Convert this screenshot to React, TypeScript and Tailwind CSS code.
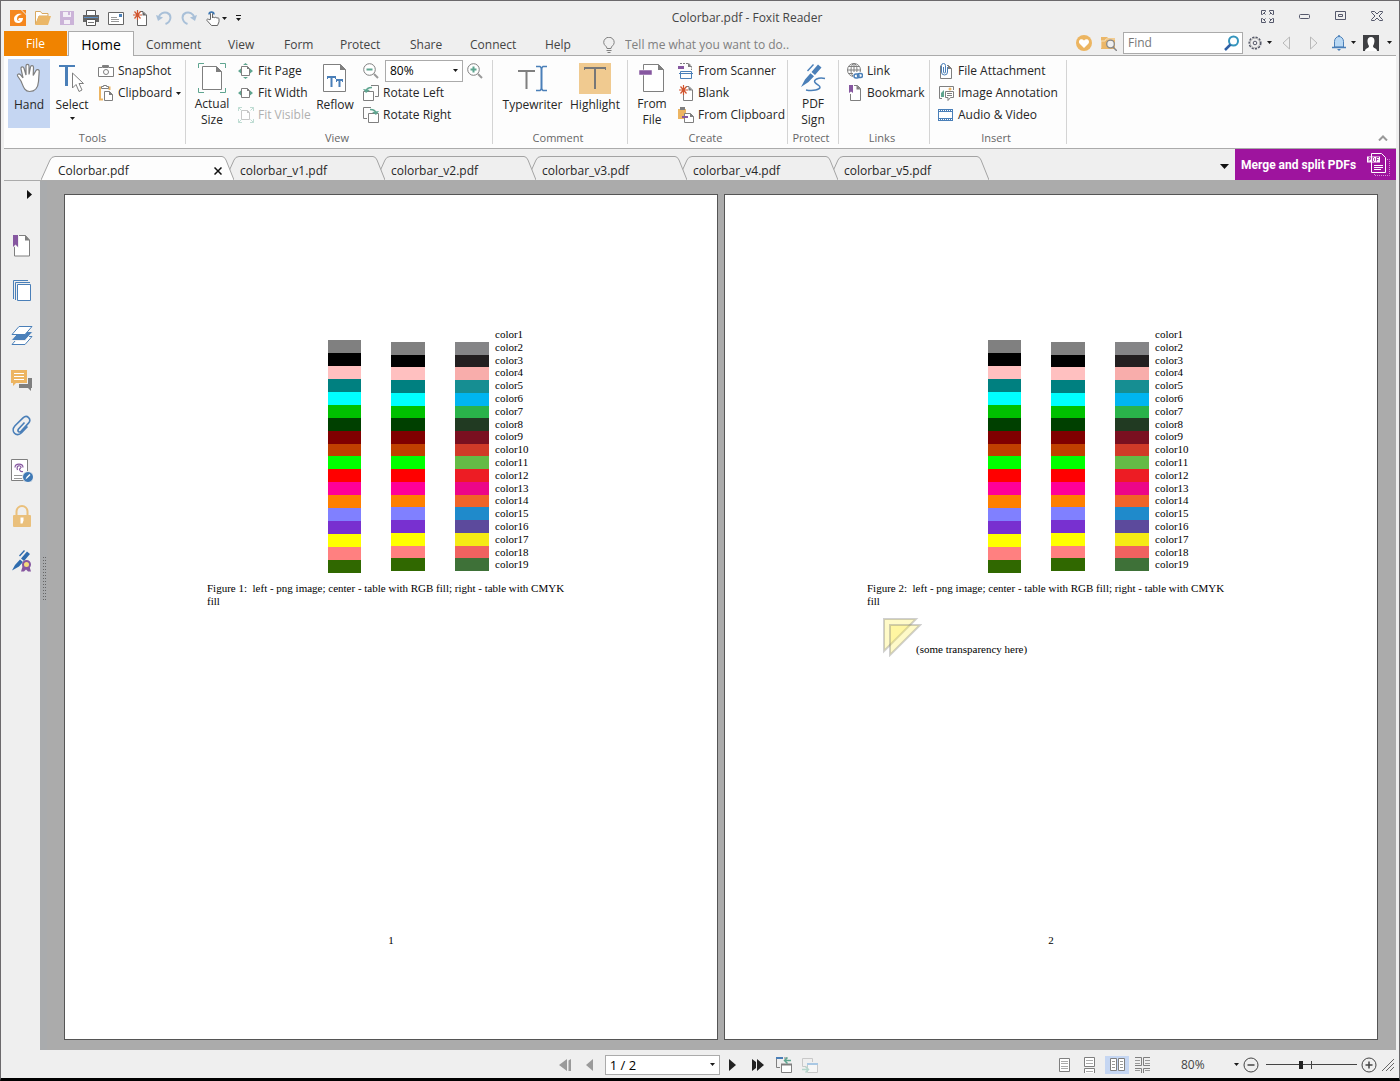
import type { ReactNode } from 'react';

const GREY = '#7f7f7f';
const BLUE = '#4a7fb8';
const GREEN = '#5fa590';
const PURPLE = '#8657a0';
const AMBER = '#edb562';

type DrawProps = { w: number; h: number; children: ReactNode; className?: string };

function Draw({ w, h, children, className = 'shrink-0' }: DrawProps) {
  return (
    <svg width={w} height={h} viewBox={`0 0 ${w} ${h}`} fill="none" className={className} aria-hidden="true">
      {children}
    </svg>
  );
}

function Caret({ className = 'shrink-0' }: { className?: string }) {
  return (
    <Draw w={5} h={3} className={className}>
      <path d="M0 0h5L2.500 3z" fill="#1a1a1a" />
    </Draw>
  );
}

/* Quick access toolbar */

const FoxitLogo = () => (
  <Draw w={16} h={16}>
    <path d="M0 0h11l5 5v11H0z" fill="#f5871f" />
    <path d="M12 0h4v4z" fill="#f5871f" />
    <path d="M12 4C8 3 4 5 4 9c0 3 2 4 4 4 3 0 5-2 5-5H9l-1 2h2c-1 1-3 1-3-1 0-3 2-4 5-5z" fill="#fff" />
  </Draw>
);
const OpenIcon = () => (
  <Draw w={16} h={14}>
    <path d="M.5 13V.5h5l1.500 2h6V5H4L1 13" fill="#fff" stroke="#d9a860" />
    <path d="M4 5h12l-3 9H0z" fill="#ebb768" />
  </Draw>
);
const SaveIcon = () => (
  <Draw w={14} h={14}>
    <path d="M0 0h14v14H0z" fill="#cbb3d8" />
    <path d="M3 1h8v5H3zM4 9h6v4H4z" fill="#f3eef6" />
    <path d="M8 1h2v3H8z" fill="#cbb3d8" />
  </Draw>
);
const PrintIcon = () => (
  <Draw w={16} h={16}>
    <path d="M3.500 5V.5h9V5" fill="#fff" stroke="#555" />
    <path d="M0 5h16v7H0z" fill="#666" />
    <path d="M1 7h14v1H1z" fill="#5d8fc4" />
    <path d="M3.500 9.500h9v6h-9z" fill="#fff" stroke="#555" />
    <path d="M5 12.500h6" stroke="#777" />
  </Draw>
);
const MailIcon = () => (
  <Draw w={16} h={13}>
    <path d="M.5.5h15v12H.5z" fill="#fff" stroke="#666" />
    <path d="M3 5.500h6M3 7.500h8M3 9.500h8" stroke="#999" />
    <path d="M11 2h3v3h-3z" fill={BLUE} />
  </Draw>
);
const NewPageIcon = ({ line = GREY }: { line?: string }) => (
  <Draw w={14} h={16}>
    <path d="M4.500 8v7.500h9V5L10 1.500H7" fill="#fff" stroke={line} />
    <path d="M9.500 1.500v4h4z" fill={line} />
    <path d="M4.500 0v10M0 5h9M1.500 1.500l6 7M7.500 1.500l-6 7" stroke="#d1552f" strokeWidth="1.200" />
  </Draw>
);
const UndoIcon = ({ flip = false }: { flip?: boolean }) => (
  <Draw w={16} h={14} className={flip ? 'shrink-0 -scale-x-100' : 'shrink-0'}>
    <path d="M2.500 6.500C4 2 8 .8 11 1.800c5 1.800 4.500 9-1.500 11.200" stroke="#a9c0d8" strokeWidth="2" />
    <path d="M0 4l2 6 5-3.500z" fill="#a9c0d8" />
  </Draw>
);
const TouchIcon = () => (
  <Draw w={14} h={16}>
    <path d="M4.500 9.500V3.500c0-1.500 2-1.500 2 0V8c0-1 2-1 2 0 0-1 2.500-1 2.500.3 0-.8 2-.6 2 .5v3L11.500 15.500h-6L1 10.500c-.8-1.200.8-2 2-.8z" fill="#fff" stroke="#666" />
    <path d="M3 4.500a2.500 2.500 0 1 1 5 0" stroke="#3d77b3" strokeWidth="1.500" />
  </Draw>
);

/* Ribbon icons, 32px */

const HandIcon = () => (
  <Draw w={26} h={32}>
    <path d="M5 19 1.600 14C.8 12.400 2.800 11.200 4.200 12.500L7 16 5 6.800C4.600 4.500 7.300 4 8 6.200L10 13V4c0-2.200 3-2.200 3 0v8.500L14.500 5c.4-2 3.100-1.600 3 .5L17.200 13.500 20 8.500c1-1.800 3.600-.8 3.200 1L22.500 19.500C22 26 19 29.500 13.500 29.500 8.500 29.500 7.500 25 5 19z" fill="#fff" stroke={GREY} strokeWidth="1.200" />
  </Draw>
);
const SelectIcon = () => (
  <Draw w={26} h={32}>
    <path d="M0 3h16v2H0zM6 3h3v21H6z" fill={BLUE} />
    <path d="M13.500 11v15l3.500-3.500 3 7 3-1.500-3-6.500h4.500z" fill="#fff" stroke={GREY} />
  </Draw>
);
const ActualSizeIcon = () => (
  <Draw w={28} h={32}>
    <path d="M.5 6V1.500H6M22 1.500h5.500V6M.5 26v4.500H6M22 30.500h5.500V26" stroke={GREEN} />
    <path d="M4.500 4.500h14l5 5v18h-19z" fill="#fff" stroke={GREY} />
    <path d="M18 4v6h6z" fill={GREY} />
  </Draw>
);
const ReflowIcon = () => (
  <Draw w={24} h={32}>
    <path d="M.5 2.500h17l5 5v22H.5z" fill="#fff" stroke={GREY} />
    <path d="M17 2v6h6z" fill={GREY} />
    <path d="M4 14h9v3h-1v-1H9.500v9h-2v-9H5v1H4zM13 17h7v3h-1v-1h-1.500v6h-2v-6H14v1h-1z" fill={BLUE} />
  </Draw>
);
const TypewriterIcon = () => (
  <Draw w={30} h={32}>
    <path d="M1 10V9h15v1M8.500 9v18" stroke={GREY} strokeWidth="2" />
    <path d="M18 4.500h4l1.500 1.500L25 4.500h4M18 28.500h4l1.500-1.500 1.500 1.500h4" stroke={BLUE} strokeWidth="1.500" />
    <path d="M23.500 5v23" stroke={BLUE} strokeWidth="2" />
  </Draw>
);
const HighlightIcon = () => (
  <Draw w={32} h={32}>
    <path d="M0 1h32v31H0z" fill="#f0ca90" />
    <path d="M5 6h22M16 6v21" stroke="#777" strokeWidth="2" />
    <path d="M5.500 5v3M26.500 5v3" stroke="#777" />
  </Draw>
);
const FromFileIcon = () => (
  <Draw w={26} h={32}>
    <path d="M4.500 2.500h15l5 5v22h-20z" fill="#fff" stroke={GREY} />
    <path d="M19 2v6h6z" fill={GREY} />
    <path d="M0 8h13v5H0z" fill={PURPLE} stroke="#fdfdfd" strokeWidth=".5" />
  </Draw>
);
const SignIcon = () => (
  <Draw w={26} h={32}>
    <path d="M7 8.500 13 2l1 1-6 6.500z" fill={BLUE} />
    <path d="M11.500 10 18 2.500 21.500 5.500 15 13zM10.500 11.300 14 14.300 8.500 20 1 25l4-7.500z" fill={BLUE} />
    <path d="M25 16.500c-7-1.500-12 1.500-10 4s5.500 3 5 5-6.500 4-14 2.500" stroke={BLUE} strokeWidth="1.500" />
  </Draw>
);

/* Ribbon icons, 16px */

const CameraIcon = () => (
  <Draw w={16} h={16}>
    <path d="M.5 4.500h4v-2h6v2h5v9H.5z" fill="#fff" stroke={GREY} />
    <circle cx="8" cy="9" r="2.500" stroke={GREY} />
    <path d="M5 2h5v3H5z" fill={GREY} />
  </Draw>
);
const ClipboardIcon = () => (
  <Draw w={16} h={16}>
    <path d="M3 2.500H2v12h3M10 2.500h1.500V5" stroke={AMBER} strokeWidth="2" />
    <path d="M3.500 3.500v-2h2V.5h3v1h2v2z" fill="#fff" stroke={GREY} />
    <path d="M6.500 6.500h5l3 3v6h-8z" fill="#fff" stroke={GREY} />
    <path d="M11 6v4h4z" fill={GREY} />
  </Draw>
);
type FitKind = 'page' | 'width' | 'visible';
const FitIcon = ({ kind }: { kind: FitKind }) => {
  const line = kind === 'visible' ? '#c8c8c8' : GREY;
  return (
    <Draw w={16} h={16}>
      <path d="M3.500 3.500h6l2 2v7h-8z" fill="#fff" stroke={line} />
      <path d="M9 3v3h3z" fill={line} />
      {kind !== 'visible' && <path d="M0 8l3-2.500v5zM15 8l-3-2.500v5z" fill={GREEN} />}
      {kind === 'page' && <path d="M7.500 0l2.500 2H5zM7.500 16l2.500-2H5z" fill={GREEN} />}
      {kind === 'visible' && (
        <path d="M.5 4V.5H4M.5.5l3 3M12 .5h3.500V4M15.500.5l-3 3M.5 12v3.500H4M.5 15.500l3-3M12 15.500h3.500V12M15.500 15.500l-3-3" stroke="#bfdcd3" />
      )}
    </Draw>
  );
};
const ZoomIcon = ({ plus = false }: { plus?: boolean }) => (
  <Draw w={16} h={16}>
    <circle cx="6.500" cy="6.500" r="5.800" fill="#fff" stroke={GREY} />
    <path d="M11 11l4 4" stroke="#999" strokeWidth="2" />
    <path d={plus ? 'M3.500 6.500h6M6.500 3.500v6' : 'M3.500 6.500h6'} stroke={GREEN} strokeWidth="2" />
  </Draw>
);
const RotateIcon = ({ right = false }: { right?: boolean }) => (
  <Draw w={16} h={16} className={right ? 'shrink-0 -scale-x-100' : 'shrink-0'}>
    <path d="M8 .5h7.500v11H12" stroke={GREY} />
    <path d="M.5 6.500h10v9H.5z" fill="#fff" stroke={GREY} />
    <path d="M3 7c0-3 2-4.500 6-4.500" stroke={GREEN} strokeWidth="1.500" />
    <path d="M0 4l3 4 4-3z" fill={GREEN} />
  </Draw>
);
const ScannerIcon = () => (
  <Draw w={16} h={16}>
    <path d="M2 .5h9l2.500 3V7" stroke={GREY} strokeDasharray="2 1" />
    <path d="M10 0v4h4z" fill={GREY} />
    <path d="M0 3h6v3H0z" fill={PURPLE} />
    <path d="M2.500 10V8.500h11V10M2.500 11v4.500h11V11M1 10.500h14" stroke={BLUE} />
  </Draw>
);
const PasteIcon = () => (
  <Draw w={16} h={16}>
    <path d="M0 2h8v10H0z" fill={AMBER} />
    <path d="M2 0h5v3H2z" fill={GREY} />
    <path d="M6.500 6.500h6l3 3v6h-9z" fill="#fff" stroke={GREY} />
    <path d="M12 6v4h4z" fill={GREY} />
    <path d="M4 9h6v2H4z" fill={PURPLE} />
  </Draw>
);
const LinkIcon = () => (
  <Draw w={16} h={16}>
    <circle cx="7" cy="7" r="6.500" stroke={GREY} />
    <ellipse cx="7" cy="7" rx="3" ry="6.500" stroke={GREY} />
    <path d="M.5 7h13M1.500 3.500h11M1.500 10.500h6M7 .5v13" stroke={GREY} />
    <path d="M6 9h10v7H6z" fill="#fdfdfd" />
    <rect x="7" y="11" width="5" height="4" rx="2" stroke={BLUE} strokeWidth="1.500" />
    <rect x="10.500" y="10.500" width="5" height="4" rx="2" stroke={BLUE} strokeWidth="1.500" />
  </Draw>
);
const BookmarkIcon = () => (
  <Draw w={16} h={16}>
    <path d="M7 .5h3.500l3 3v12h-10V9" fill="#fff" stroke={GREY} />
    <path d="M9.500 0v4.500H14z" fill={GREY} />
    <path d="M2 0h4v8L4 6.500 2 8z" fill={PURPLE} />
  </Draw>
);
const AttachmentIcon = () => (
  <Draw w={16} h={16}>
    <path d="M2.500 2.500v13h11v-10l-3-3H9" fill="#fff" stroke={GREY} />
    <path d="M10 2v4h4z" fill={GREY} />
    <path d="M5.500 4v5a1 1 0 0 0 2 0V2.500a2 2 0 0 0-4 0V9a2.500 2.500 0 0 0 6 0V4" stroke={BLUE} />
  </Draw>
);
const ImageNoteIcon = () => (
  <Draw w={16} h={16}>
    <path d="M4 13.500H1.500v-12h14V5" stroke={GREY} />
    <path d="M3 12V8l3-3v7z" fill={GREEN} />
    <circle cx="12" cy="4" r="1.500" fill={AMBER} />
    <path d="M7.500 6.500h8v6h-3l-2.500 3v-3H7.500z" fill="#fff" stroke={GREY} />
    <path d="M9 8.500h5M9 10.500h5" stroke={GREY} />
  </Draw>
);
const FilmIcon = () => (
  <Draw w={16} h={16}>
    <path d="M.5 2.500h14v11H.5z" fill="#fff" stroke={BLUE} />
    <path d="M0 2h15v3H0zM0 11h15v3H0z" fill={BLUE} />
    <path d="M1 3.500h13M1 12.500h13" stroke="#fff" strokeDasharray="1 1" />
  </Draw>
);

/* Navigation panel icons */

const NavBookmark = () => (
  <Draw w={18} h={22}>
    <path d="M1.500.500h11l4 4.500v16h-15z" fill="#fff" stroke={GREY} />
    <path d="M12 0v5.500h5z" fill={GREY} />
    <path d="M0 0h6v13l-3-2-3 2z" fill="#efefef" />
    <path d="M0 0h5v12L2.500 9.500 0 12z" fill={PURPLE} />
  </Draw>
);
const NavPages = () => (
  <Draw w={18} h={22}>
    <path d="M.5 19V.5H15M2.500 20V2.500H17" stroke={BLUE} />
    <path d="M4.500 4.500h13v16h-13z" fill="#fff" stroke={BLUE} />
  </Draw>
);
const NavLayers = () => (
  <Draw w={22} h={20}>
    <path d="M1 18.500h13l7-8H8z" fill="#fff" stroke={BLUE} />
    <path d="M0 14.500h14l8-9H8z" fill="#4a80ba" stroke="#efefef" />
    <path d="M1 8.500h13l7-8H8z" fill="#fff" stroke={BLUE} />
  </Draw>
);
const NavComments = () => (
  <Draw w={22} h={22}>
    <path d="M8 8h13v10h-1v3l-3-3H8z" fill={GREY} />
    <path d="M0 0h17v14H6l-4 3v-3H0z" fill="#efefef" />
    <path d="M0 0h16v13H5l-3 3v-3H0z" fill={AMBER} />
    <path d="M3 3.500h10M3 6.500h10M3 9.500h10" stroke="#fff" />
  </Draw>
);
const NavClip = () => (
  <Draw w={20} h={22}>
    <path d="M12.500 7.500l-6 6.500c-1.500 2 .7 4 2.500 2.300l7.500-8.200c3.500-4-1.500-9-5.500-5.200L3 10.800c-5 5.500 1.500 12.200 6.500 7l6-6.300" stroke={BLUE} strokeWidth="1.600" />
  </Draw>
);
const NavSignedDoc = () => (
  <Draw w={22} h={23}>
    <path d="M.5.5h16v21H.5z" fill="#fff" stroke={GREY} />
    <path d="M4 8.500C4 4 12 4 12 8.500M6.500 11C4.500 6 10.500 5.500 10 9M12 12.500c-3.500 1-4.500-3.500-2-3.500" stroke={PURPLE} strokeWidth="1.200" />
    <path d="M3 16.500h9M3 19.500h8" stroke="#999" />
    <circle cx="17" cy="18" r="5.500" fill="#3f79b5" stroke="#efefef" />
    <path d="M14.500 20.500l1-2.500 3-3 1 1-3 3z" fill="#fff" />
  </Draw>
);
const NavLock = () => (
  <Draw w={18} h={22}>
    <path d="M3.500 11V6.500a5.500 5.500 0 0 1 11 0V11" stroke="#eac07c" strokeWidth="2" />
    <rect y="10" width="18" height="12" rx="1" fill="#eac07c" />
    <path d="M7.500 12.500h3v3l-1 3h-2z" fill="#fff" />
  </Draw>
);
const NavSignature = () => (
  <Draw w={20} h={22}>
    <path d="M7 5.500 12 0l1 1-5 5.500zM9 8.500 15 1.500l3 2.500-6 7zM8 9.500l3 2.500-4 4.500L0 20.500 3 15z" fill="#2f6cae" />
    <path d="M11 15l-2 6.500h3l2-2 2 2h3L17 15z" fill={PURPLE} />
    <circle cx="14.500" cy="14.500" r="3.500" fill="#f5dc7a" stroke={PURPLE} strokeWidth="2" />
  </Draw>
);

/* Ribbon building blocks */

function BigButton({ icon, lines, className, menu = false, pressed = false }: {
  icon: ReactNode; lines: string[]; className: string; menu?: boolean; pressed?: boolean;
}) {
  return (
    <button
      type="button"
      aria-pressed={pressed}
      className={`flex h-[69px] shrink-0 flex-col items-center pt-[3px] ${pressed ? 'bg-[#c5d6f2]' : ''} ${className}`}
    >
      <span className="flex h-[35px] items-start justify-center">{icon}</span>
      {lines.map((line) => (
        <span key={line} className="leading-4">{line}</span>
      ))}
      {menu && <Caret className="mt-1 shrink-0" />}
    </button>
  );
}

function SmallButton({ icon, label, menu = false, disabled = false }: {
  icon: ReactNode; label: string; menu?: boolean; disabled?: boolean;
}) {
  return (
    <button type="button" disabled={disabled} className="flex h-[22px] items-center gap-1 text-left disabled:text-[#b0b0b0]">
      <span className="flex w-4 shrink-0 justify-center">{icon}</span>
      <span>{label}</span>
      {menu && <Caret />}
    </button>
  );
}

function Group({ title, className, children }: { title: string; className: string; children: ReactNode }) {
  return (
    <section aria-label={title} className={`flex shrink-0 flex-col ${className}`}>
      <div className="flex flex-1 pt-[3px]">{children}</div>
      <div className="pr-1 pb-[2px] text-center text-[11px] leading-4 text-[#666]">{title}</div>
    </section>
  );
}

const Divider = () => <div className="my-1 w-px shrink-0 bg-[#d4d4d4]" />;

function Ribbon() {
  return (
    <div className="flex h-[93px] border-b border-[#ababab] bg-[#fdfdfd] text-[#262626]">
      <Group title="Tools" className="w-[181px]">
        <BigButton icon={<HandIcon />} lines={['Hand']} className="ml-1 w-[42px]" pressed />
        <BigButton icon={<SelectIcon />} lines={['Select']} className="w-11" menu />
        <div className="pt-px pl-1">
          <SmallButton icon={<CameraIcon />} label="SnapShot" />
          <SmallButton icon={<ClipboardIcon />} label="Clipboard" menu />
        </div>
      </Group>
      <Divider />
      <Group title="View" className="w-[306px]">
        <BigButton icon={<ActualSizeIcon />} lines={['Actual', 'Size']} className="ml-1 w-11" />
        <div className="w-[77px] pt-px pl-1">
          <SmallButton icon={<FitIcon kind="page" />} label="Fit Page" />
          <SmallButton icon={<FitIcon kind="width" />} label="Fit Width" />
          <SmallButton icon={<FitIcon kind="visible" />} label="Fit Visible" disabled />
        </div>
        <BigButton icon={<ReflowIcon />} lines={['Reflow']} className="w-12" />
        <div className="pl-1">
          <div className="flex h-[23px] items-center">
            <button type="button" aria-label="Zoom out"><ZoomIcon /></button>
            <span className="relative mr-1 ml-[6px] flex items-center">
              <select aria-label="Zoom level" className="h-[22px] w-[78px] appearance-none border border-[#ababab] bg-white pl-1 text-black">
                <option>80%</option>
              </select>
              <Caret className="pointer-events-none absolute right-[5px]" />
            </span>
            <button type="button" aria-label="Zoom in"><ZoomIcon plus /></button>
          </div>
          <SmallButton icon={<RotateIcon />} label="Rotate Left" />
          <SmallButton icon={<RotateIcon right />} label="Rotate Right" />
        </div>
      </Group>
      <Divider />
      <Group title="Comment" className="w-[134px]">
        <BigButton icon={<TypewriterIcon />} lines={['Typewriter']} className="ml-1 w-[71px]" />
        <BigButton icon={<HighlightIcon />} lines={['Highlight']} className="w-[54px]" />
      </Group>
      <Divider />
      <Group title="Create" className="w-[159px]">
        <BigButton icon={<FromFileIcon />} lines={['From', 'File']} className="w-12" />
        <div className="pt-px pl-[2px]">
          <SmallButton icon={<ScannerIcon />} label="From Scanner" />
          <SmallButton icon={<NewPageIcon />} label="Blank" />
          <SmallButton icon={<PasteIcon />} label="From Clipboard" />
        </div>
      </Group>
      <Divider />
      <Group title="Protect" className="w-[50px]">
        <BigButton icon={<SignIcon />} lines={['PDF', 'Sign']} className="w-full" />
      </Group>
      <Divider />
      <Group title="Links" className="w-[90px]">
        <div className="pt-px pl-2">
          <SmallButton icon={<LinkIcon />} label="Link" />
          <SmallButton icon={<BookmarkIcon />} label="Bookmark" />
        </div>
      </Group>
      <Divider />
      <Group title="Insert" className="w-[136px]">
        <div className="pt-px pl-2">
          <SmallButton icon={<AttachmentIcon />} label="File Attachment" />
          <SmallButton icon={<ImageNoteIcon />} label="Image Annotation" />
          <SmallButton icon={<FilmIcon />} label="Audio & Video" />
        </div>
      </Group>
      <Divider />
      <button type="button" aria-label="Collapse ribbon" className="mt-auto mr-2 mb-[7px] ml-auto">
        <Draw w={10} h={6}>
          <path d="M1 5.500l4-4 4 4" stroke="#999" strokeWidth="2" />
        </Draw>
      </button>
    </div>
  );
}

function TitleBar() {
  const win = '#55586b';
  return (
    <header className="flex h-[30px] items-center pr-[13px] pl-[6px] text-[#444]">
      <div className="flex items-center gap-[9px] pt-1">
        <FoxitLogo />
        <button type="button" aria-label="Open"><OpenIcon /></button>
        <button type="button" aria-label="Save"><SaveIcon /></button>
        <button type="button" aria-label="Print"><PrintIcon /></button>
        <button type="button" aria-label="Email"><MailIcon /></button>
        <button type="button" aria-label="New"><NewPageIcon line="#666" /></button>
        <button type="button" aria-label="Undo"><UndoIcon /></button>
        <button type="button" aria-label="Redo"><UndoIcon flip /></button>
        <button type="button" aria-label="Touch mode" className="flex items-center gap-[2px]">
          <TouchIcon />
          <Caret />
        </button>
        <button type="button" aria-label="Customize">
          <Draw w={5} h={6}>
            <path d="M0 0h5v1H0zM0 3h5L2.500 6z" fill="#1a1a1a" />
          </Draw>
        </button>
      </div>
      <h1 className="flex-1 pt-1 pr-2 text-center">Colorbar.pdf - Foxit Reader</h1>
      <div className="flex items-center gap-[25px]">
        <button type="button" aria-label="Full screen">
          <Draw w={13} h={13}>
            <path d="M.5.5h4v1l-3 3h-1zM12.500.500h-4v1l3 3h1zM.5 12.500h4v-1l-3-3h-1zM12.500 12.500h-4v-1l3-3h1z" stroke={win} />
            <path d="M3 3l1.500 1.500M10 3 8.500 4.500M3 10l1.500-1.500M10 10 8.500 8.500" stroke={win} />
          </Draw>
        </button>
        <button type="button" aria-label="Minimize">
          <Draw w={11} h={5}><rect x=".5" y=".5" width="10" height="4" rx="1" stroke={win} /></Draw>
        </button>
        <button type="button" aria-label="Maximize">
          <Draw w={11} h={10}><path d="M.5.5h10v8H.5zM3.500 3.500h4v2h-4z" stroke={win} /></Draw>
        </button>
        <button type="button" aria-label="Close">
          <Draw w={12} h={10}>
            <path d="M.5.5h3L6 3 8.500.500h3v1L8 5l3.500 3.500v1h-3L6 7 3.500 9.500h-3v-1L4 5 .5 1.500z" stroke={win} />
          </Draw>
        </button>
      </div>
    </header>
  );
}

const MENU = [
  { label: 'Comment', width: 'w-[82px]' },
  { label: 'View', width: 'w-14' },
  { label: 'Form', width: 'w-14' },
  { label: 'Protect', width: 'w-[70px]' },
  { label: 'Share', width: 'w-[60px]' },
  { label: 'Connect', width: 'w-[75px]' },
  { label: 'Help', width: 'w-[57px]' },
];

function MenuBar() {
  return (
    <nav className="flex h-[25px] text-[#444]">
      <button type="button" className="w-[63px] shrink-0 bg-[#f08300] pt-px text-white">File</button>
      <div className="flex flex-1 items-stretch border-b border-[#ababab] pl-px">
        <button type="button" className="-mb-px w-[66px] shrink-0 border border-b-0 border-[#ababab] bg-[#fdfdfd] pt-[2px] text-[14px] text-black">Home</button>
        <div className="flex pl-3">
          {MENU.map((m) => (
            <button key={m.label} type="button" className={`shrink-0 pt-[3px] text-left ${m.width}`}>{m.label}</button>
          ))}
        </div>
        <label className="flex min-w-0 flex-1 items-center gap-[10px] pt-[3px] pl-px">
          <Draw w={12} h={16}>
            <path d="M4 11.500C4 9 .7 8.500.700 5.500a5.200 5.200 0 0 1 10.500 0C11.200 8.500 8 9 8 11.500zM3.500 13.500h5M4.500 15.500h3" stroke={GREY} />
          </Draw>
          <input aria-label="Tell me what you want to do" placeholder="Tell me what you want to do.." className="min-w-0 flex-1 bg-transparent outline-none placeholder:text-[#808080]" />
        </label>
        <div className="flex shrink-0 items-center pr-1 pb-px">
          <button type="button" aria-label="Favourites">
            <Draw w={16} h={16}>
              <circle cx="8" cy="8" r="8" fill="#ecb561" />
              <path d="M8 13 3.500 8.500C1.500 5.500 5.500 2.500 8 5.500c2.500-3 6.500 0 4.500 3z" fill="#fff" />
            </Draw>
          </button>
          <button type="button" aria-label="Find in folder" className="ml-[9px]">
            <Draw w={16} h={16}>
              <path d="M0 2h6l1 1h7v11H0z" fill="#ebb768" />
              <path d="M0 13V6h4l1-2h9" stroke="#f6e0bb" />
              <circle cx="9.500" cy="9" r="3.800" fill="#efefef" stroke="#888" strokeWidth="1.300" />
              <path d="M12 12l4 4" stroke="#888" strokeWidth="1.500" />
            </Draw>
          </button>
          <label className="ml-[6px] flex h-[22px] w-[120px] items-center border border-[#ababab] bg-white pr-[2px] pl-1">
            <input aria-label="Find" placeholder="Find" className="w-0 min-w-0 flex-1 outline-none placeholder:text-[#777]" />
            <Draw w={16} h={16}>
              <circle cx="9.500" cy="6" r="4.500" stroke="#3595bd" strokeWidth="2" />
              <path d="M6.500 9.500 1 15" stroke="#2f5fa5" strokeWidth="2.500" />
            </Draw>
          </label>
          <button type="button" aria-label="Settings" className="ml-[5px] flex items-center gap-[5px]">
            <Draw w={14} h={14}>
              <circle cx="7" cy="7" r="5.800" stroke="#555868" strokeWidth="1.500" strokeDasharray="2.200 1.200" />
              <circle cx="7" cy="7" r="4.800" fill="#efefef" stroke="#777" strokeWidth=".5" />
              <circle cx="7" cy="7" r="1.800" stroke="#555868" />
            </Draw>
            <Caret />
          </button>
          <button type="button" aria-label="Previous result" className="ml-[10px]">
            <Draw w={8} h={14}><path d="M7.500 1v12L1 7z" stroke="#b8b8b8" /></Draw>
          </button>
          <button type="button" aria-label="Next result" className="ml-5">
            <Draw w={8} h={14}><path d="M.5 1v12L7 7z" stroke="#b8b8b8" /></Draw>
          </button>
          <button type="button" aria-label="Notifications" className="ml-[14px] flex items-center gap-[5px]">
            <Draw w={14} h={16}>
              <path d="M2.500 12V6.500a4.500 5 0 0 1 9 0V12z" fill="#b9d8f3" stroke={BLUE} />
              <path d="M0 12.500h14M7 0v2" stroke={BLUE} strokeWidth="1.500" />
              <path d="M5 14h4l-2 2z" fill={BLUE} />
            </Draw>
            <Caret />
          </button>
          <button type="button" aria-label="Account" className="ml-[7px] flex items-center gap-2">
            <Draw w={16} h={16}>
              <path d="M0 0h16v16H0z" fill="#3f4043" />
              <path d="M2 16c0-3 4-2.500 4-5-2-3-2.500-9 2-9s4 6 2 9c0 2.500 4 2 4 5z" fill="#fff" />
            </Draw>
            <Caret />
          </button>
        </div>
      </div>
    </nav>
  );
}

function DocTab({ name, width, layer, active = false }: { name: string; width: string; layer: string; active?: boolean }) {
  const fill = active ? '#fdfdfd' : '#efefef';
  return (
    <div className={`relative flex h-6 shrink-0 ${width} ${layer}`}>
      <Draw w={14} h={24}>
        <path d="M0 24 9 4Q10.500.5 14 .5V24z" fill={fill} />
        <path d="M0 24 9 4Q10.500.5 14 .5" stroke="#a3a3a3" />
      </Draw>
      <div className={`flex min-w-0 flex-1 items-center justify-between border-t border-[#a3a3a3] pt-1 ${active ? 'bg-[#fdfdfd]' : 'bg-[#efefef]'}`}>
        <button type="button" className={active ? 'pl-[3px]' : 'pl-px'}>{name}</button>
        {active && (
          <button type="button" aria-label="Close tab">
            <Draw w={8} h={8}><path d="M.5.5l7 7M7.500.500l-7 7" stroke="#111" strokeWidth="1.500" /></Draw>
          </button>
        )}
      </div>
      <Draw w={12} h={24}>
        <path d="M12 24 4 4Q2.500.5 0 .5V24z" fill={fill} />
        <path d="M12 24 4 4Q2.500.5 0 .5" stroke="#a3a3a3" />
      </Draw>
    </div>
  );
}

function DocTabs() {
  return (
    <div className="flex h-8 items-end border-b border-[#ababab] pl-[37px] text-[#262626]">
      <DocTab name="Colorbar.pdf" width="w-[193px]" layer="z-50" active />
      <DocTab name="colorbar_v1.pdf" width="w-40 -ml-[9px]" layer="z-40" />
      <DocTab name="colorbar_v2.pdf" width="w-40 -ml-[9px]" layer="z-30" />
      <DocTab name="colorbar_v3.pdf" width="w-40 -ml-[9px]" layer="z-20" />
      <DocTab name="colorbar_v4.pdf" width="w-40 -ml-[9px]" layer="z-10" />
      <DocTab name="colorbar_v5.pdf" width="w-40 -ml-[9px]" layer="z-0" />
      <div className="ml-auto flex items-center self-stretch">
        <button type="button" aria-label="Tab list" className="pt-1 pr-[6px]">
          <Draw w={9} h={5}><path d="M0 0h9L4.500 5z" fill="#111" /></Draw>
        </button>
        <button type="button" className="flex w-[161px] items-center justify-between self-stretch bg-[#9e149e] px-[6px] font-['Roboto',sans-serif] text-[12px] font-bold text-white">
          Merge and split PDFs
          <Draw w={23} h={24}>
            <path d="M20 6.500h2.500v16H7.500V21" stroke="#d58fd5" strokeDasharray="1 1" />
            <path d="M4.500 4V.5h10l4 4v15h-14V9" stroke="#fff" />
            <path d="M0 3.500h13v6H0z" fill="#fff" />
            <path d="M2 8.500v-4h1.500v2H2M5.500 4.500v4h1l1-1v-2l-1-1zM9.500 8.500v-4h2.500M9.500 6.500h2" stroke="#9e149e" strokeWidth=".8" />
            <path d="M7 12.500h9M7 14.500h9M7 16.500h7" stroke="#fff" />
          </Draw>
        </button>
      </div>
    </div>
  );
}

const NAV = [
  { label: 'Bookmarks', icon: <NavBookmark /> },
  { label: 'Page thumbnails', icon: <NavPages /> },
  { label: 'Layers', icon: <NavLayers /> },
  { label: 'Comments', icon: <NavComments /> },
  { label: 'Attachments', icon: <NavClip /> },
  { label: 'Signed document', icon: <NavSignedDoc /> },
  { label: 'Security', icon: <NavLock /> },
  { label: 'Digital signatures', icon: <NavSignature /> },
];

function Sidebar() {
  return (
    <aside className="flex w-9 shrink-0 flex-col">
      <button type="button" aria-label="Expand panel" className="mb-4 flex h-[26px] items-center justify-end pr-2">
        <Draw w={5} h={9}><path d="M0 0v9l5-4.500z" fill="#111" /></Draw>
      </button>
      {NAV.map((n) => (
        <button key={n.label} type="button" aria-label={n.label} className="flex h-[45px] items-center justify-center">
          {n.icon}
        </button>
      ))}
    </aside>
  );
}

const RGB = [
  '#808080', '#000000', '#ffc0c0', '#008080', '#00ffff', '#00c000', '#004000', '#800000', '#c04000',
  '#00ff00', '#ff0000', '#ff0098', '#ff8000', '#8080ff', '#7830d0', '#ffff00', '#ff8080', '#306800',
];
const CMYK = [
  '#858587', '#231f20', '#f8adab', '#168e92', '#00b5f0', '#2ab34a', '#213a22', '#7a1020', '#d03a28',
  '#64bb46', '#ed1c24', '#ec0688', '#f06428', '#1f8acb', '#5c4a9c', '#f5ea14', '#f06260', '#3e7138',
];
const LABELS = Array.from({ length: 19 }, (_, i) => `color${i + 1}`);

function Swatches({ colors, className }: { colors: string[]; className: string }) {
  return (
    <div className={`flex flex-col ${className}`}>
      {colors.map((c) => (
        <div key={c} className="flex-1" style={{ backgroundColor: c }} />
      ))}
    </div>
  );
}

function Page({ num, children }: { num: number; children?: ReactNode }) {
  return (
    <article className="flex flex-1 flex-col items-center border border-[#555] bg-white pt-[133px] pb-[92px] font-['Liberation_Serif',serif] text-[11px] leading-[13px] text-black">
      <div className="w-[368px]">
        <figure>
          <div className="flex h-[243px] pl-[121px]">
            <Swatches colors={RGB} className="mt-3 h-[233px] w-[33px]" />
            <Swatches colors={RGB} className="mt-[14px] ml-[30px] h-[229px] w-[34px]" />
            <Swatches colors={CMYK} className="mt-[14px] ml-[30px] h-[229px] w-[34px]" />
            <ul className="ml-[6px] flex flex-col">
              {LABELS.map((l) => (
                <li key={l} className="min-h-0 flex-1">{l}</li>
              ))}
            </ul>
          </div>
          <figcaption className="mt-[11px]">
            {`Figure ${num}:\u00a0 left - png image; center - table with RGB fill; right - table with CMYK fill`}
          </figcaption>
        </figure>
        {children}
      </div>
      <footer className="mt-auto">{num}</footer>
    </article>
  );
}

function StatusBar() {
  const ink = '#444';
  return (
    <footer className="flex h-7 items-center pt-px text-[#444]">
      <div className="grow-[23]" />
      <div className="flex items-center">
        <button type="button" aria-label="First page">
          <Draw w={12} h={12}><path d="M8 0v12L0 6zM12 0v12H9.500V1.500z" fill="#9a9a9a" /></Draw>
        </button>
        <button type="button" aria-label="Previous page" className="ml-[15px]">
          <Draw w={7} h={12}><path d="M7 0v12L0 6z" fill="#9a9a9a" /></Draw>
        </button>
        <span className="relative ml-3 flex items-center">
          <select aria-label="Page" className="h-5 w-[115px] appearance-none border border-[#ababab] bg-white pl-1 text-[13px] leading-4 text-black">
            <option>1 / 2</option>
          </select>
          <Caret className="pointer-events-none absolute right-[5px]" />
        </span>
        <button type="button" aria-label="Next page" className="ml-[9px]">
          <Draw w={7} h={12}><path d="M0 0v12l7-6z" fill="#222" /></Draw>
        </button>
        <button type="button" aria-label="Last page" className="ml-4">
          <Draw w={12} h={12}><path d="M0 0l4 3v6l-4 3zM5 0v12l7-6z" fill="#222" /></Draw>
        </button>
        <button type="button" aria-label="Previous view" className="ml-3">
          <Draw w={16} h={16}>
            <path d="M4 10.500H.5V1M5 1H.5M11 1H8" stroke={GREY} />
            <path d="M0 1h7" stroke={BLUE} strokeWidth="2" />
            <path d="M5.500 7.500h10v8h-10z" fill="#fff" stroke={GREY} />
            <path d="M5 7.500h11" stroke={GREY} strokeWidth="2" />
            <path d="M9 3.500h6M11.500.5l-3 3 3 3" stroke={GREEN} strokeWidth="1.500" />
          </Draw>
        </button>
        <button type="button" aria-label="Next view" className="ml-[10px]">
          <Draw w={16} h={16}>
            <path d="M4 9.500H.5v-8h10V5" stroke="#c8c8c8" />
            <path d="M5.500 7v8.500h10V7" fill="#f6f6f6" stroke="#c8c8c8" />
            <path d="M5 7h11" stroke="#a9c8e4" strokeWidth="2" />
            <path d="M0 12.500h6M3.500 9.500l3 3-3 3" stroke="#b5d6cc" strokeWidth="1.500" />
          </Draw>
        </button>
      </div>
      <div className="grow-[10]" />
      <div className="flex items-center">
        <button type="button" aria-label="Single page" className="mr-[7px]">
          <Draw w={11} h={14}><path d="M.5.5h10v13H.5z" fill="#fff" stroke={GREY} /><path d="M2 3.500h7M2 5.500h7M2 8.500h7M2 10.500h7" stroke="#aaa" /></Draw>
        </button>
        <button type="button" aria-label="Continuous" className="mx-[7px]">
          <Draw w={11} h={16}><path d="M.5.5h10v9H.5zM.5 16v-4.500h10V16" fill="#fff" stroke={GREY} /><path d="M2 3.500h7M2 6.500h7M2 14.500h7" stroke="#aaa" /></Draw>
        </button>
        <button type="button" aria-label="Facing" aria-pressed="true" className="ml-[3px] flex h-[18px] w-6 items-center justify-center bg-[#c5d6f2]">
          <Draw w={15} h={13}><path d="M.5.5h6v12h-6zM8.500.5h6v12h-6z" fill="#fff" stroke={GREY} /><path d="M2 3.500h3M2 6.500h3M2 9.500h3M10 3.500h3M10 6.500h3M10 9.500h3" stroke="#999" /></Draw>
        </button>
        <button type="button" aria-label="Continuous facing" className="ml-[6px]">
          <Draw w={15} h={16}><path d="M0 .5h6.500v8H0M15 .5H8.500v8H15M0 11.500h6.500V16M15 11.500H8.500V16" stroke={GREY} /><path d="M0 3.500h5M0 6.500h5M10 3.500h5M10 6.500h5M0 13.500h5M10 13.500h5" stroke="#999" /></Draw>
        </button>
        <button type="button" className="ml-[31px] flex w-[58px] items-center justify-between">
          80%
          <Caret />
        </button>
        <button type="button" aria-label="Zoom out" className="ml-1">
          <Draw w={16} h={16}><circle cx="8" cy="8" r="7" stroke={ink} /><path d="M4.500 8h7" stroke={ink} strokeWidth="1.500" /></Draw>
        </button>
        <span className="relative ml-[7px] flex w-[91px] items-center">
          <span className="absolute inset-x-0 h-px bg-[#444]" />
          <span className="absolute left-[45px] h-2 w-px bg-[#444]" />
          <input
            type="range"
            aria-label="Zoom"
            defaultValue={38}
            className="relative h-4 w-full appearance-none bg-transparent [&::-webkit-slider-thumb]:h-2 [&::-webkit-slider-thumb]:w-1 [&::-webkit-slider-thumb]:appearance-none [&::-webkit-slider-thumb]:bg-[#222]"
          />
        </span>
        <button type="button" aria-label="Zoom in" className="ml-1">
          <Draw w={16} h={16}><circle cx="8" cy="8" r="7" stroke={ink} /><path d="M4.500 8h7M8 4.500v7" stroke={ink} strokeWidth="1.500" /></Draw>
        </button>
        <Draw w={14} h={14} className="mr-px ml-1 shrink-0">
          <path d="M1 13 13 1M5 13l8-8M9 13l4-4" stroke="#666" />
        </Draw>
      </div>
    </footer>
  );
}

export default function App() {
  return (
    <div className="flex min-h-screen flex-col border-x border-t border-b-[3px] border-x-[#6b696c] border-t-[#6b696c] border-b-black bg-[#efefef] px-[3px] font-['Open_Sans','Noto_Sans',sans-serif] text-[12px] leading-4 whitespace-nowrap">
      <TitleBar />
      <MenuBar />
      <Ribbon />
      <DocTabs />
      <main className="flex flex-1">
        <Sidebar />
        <div className="w-[7px] shrink-0 bg-[#a9abad] pt-[376px]">
          <Draw w={7} h={44} className="block">
            <path d="M3.500 0v44M5.500 0v44" stroke="#666" strokeDasharray="1 2" />
          </Draw>
        </div>
        <div className="flex flex-1 gap-[6px] bg-[#ababab] pt-[13px] pr-[18px] pb-[10px] pl-[17px] whitespace-normal">
          <Page num={1} />
          <Page num={2}>
            <div className="mt-[9px] flex items-end pl-[15px]">
              <Draw w={40} h={40}>
                <path d="M2 2h32L2 34z" fill="#fff04a" fillOpacity=".3" stroke="#777" strokeOpacity=".35" strokeWidth="2" />
                <path d="M8 8h30L8 38z" fill="#fff04a" fillOpacity=".3" stroke="#777" strokeOpacity=".35" strokeWidth="2" />
              </Draw>
              <p className="-ml-[6px] pb-px">(some transparency here)</p>
            </div>
          </Page>
        </div>
      </main>
      <StatusBar />
    </div>
  );
}
